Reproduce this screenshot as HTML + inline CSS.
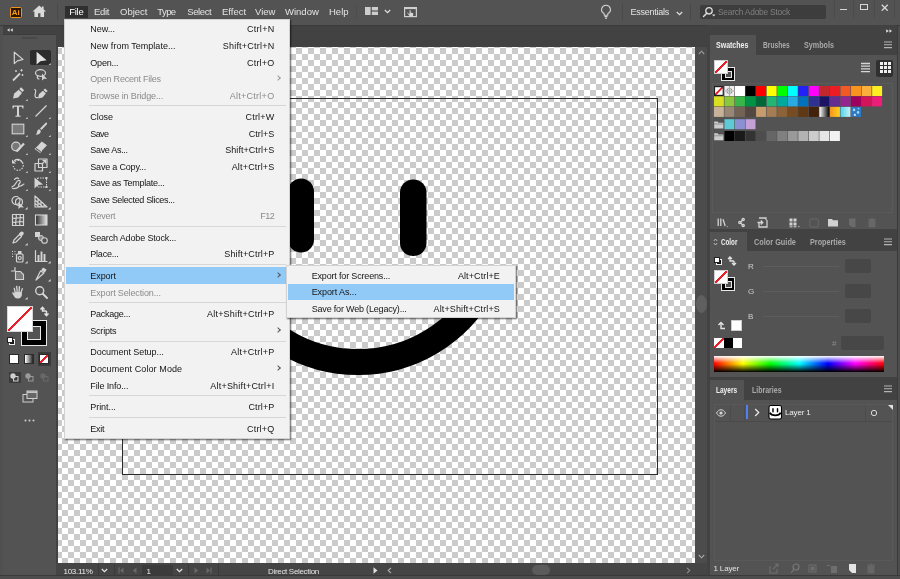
<!DOCTYPE html>
<html>
<head>
<meta charset="utf-8">
<title>Adobe Illustrator - Export As</title>
<style>
*{box-sizing:border-box;margin:0;padding:0}
html,body{width:900px;height:579px;overflow:hidden;background:#424242;font-family:"Liberation Sans",sans-serif;}
body{position:relative;color:#ddd;font-size:9px}
#root{position:absolute;left:0;top:0;width:900px;height:579px;overflow:hidden;will-change:transform}
.abs{position:absolute}
/* app bar */
#appbar{left:0;top:0;width:900px;height:26px;background:#535353;border-bottom:1px solid #3a3a3a}
#appbar .mi{position:absolute;top:6px;height:12px;line-height:12px;font-size:9.5px;color:#e4e4e4;white-space:nowrap}
#filebtn{left:65px;top:6px;width:23px;height:12px;background:#2f2f2f}
/* canvas */
#canvas{left:58px;top:47px;width:637px;height:516px;background-color:#fff;
 background-image:conic-gradient(#cbcbcb 25%,#fff 0 50%,#cbcbcb 0 75%,#fff 0);
 background-size:12px 12px;
 background-position:4px 1px;
 overflow:hidden}
#artboard{left:122px;top:98px;width:536px;height:377px;border:1px solid #2a2a2a}
/* toolbar */
#tbstrip{left:0;top:26px;width:900px;height:9px;background:#424242}
#toolbar{left:3px;top:34px;width:53px;height:541px;border-top:1px solid #3c3c3c;background:#535353}
#tbhead{left:3px;top:26px;width:53px;height:8px;background:#424242}
#leftstrip{left:0;top:26px;width:3px;height:553px;background:#505050}
/* menus */
.menu{background:#f2f2f2;border:1px solid #d2d2d2;box-shadow:1px 1px 1.5px rgba(0,0,0,.6);color:#161616;font-size:9px}
.menu .it{position:relative;height:16.53px;line-height:16.53px;white-space:nowrap}
.menu .it .l{position:absolute;left:25.3px;top:.8px}
.menu .it .r{position:absolute;right:14.6px;top:.8px}
.menu .it .a{position:absolute;right:9px;top:5.8px;width:4px;height:4px;border-top:1px solid #555;border-right:1px solid #555;transform:rotate(45deg) scale(1,1)}
.menu .it.dis{color:#8b8b8b}
.menu .it.dis .a{border-color:#9a9a9a}
.menu .it.hl{background:#91c9f7}
.menu .sep{height:5.15px;position:relative}
.menu .sep:after{content:"";position:absolute;left:24px;right:3px;top:2.1px;height:1px;background:#d7d7d7}
#filemenu{left:64px;top:19px;width:226px;height:419.5px;padding:.7px 0 0 0}
#filemenu .it.hl{margin:0 2px 0 1px}
#filemenu .it.hl .l{left:24.3px}
#filemenu .it.hl .a{right:7px}
#submenu{left:286px;top:265.2px;width:230px;height:53.3px;padding:1px 0}
#submenu .it{height:16.4px;line-height:16.4px}
#submenu .it .l{left:24.7px}
#submenu .it .r{right:15px}
#submenu .it.hl{margin:0 1.5px 0 1px}
#submenu .it.hl .l{left:23.7px}
/* right dock */
#vscroll{left:695px;top:47px;width:12px;height:516px;background:#4c4c4c}
#dockgap{left:707px;top:25px;width:3px;height:554px;background:#424242}
.panel{background:#535353}
.tabbar{background:#424242}
.tab{position:absolute;top:0;height:100%;font-size:8.5px;font-weight:bold;color:#a9a9a9;white-space:nowrap}
.tab.act{background:#535353;color:#f0f0f0}
.tab .tx{position:absolute;top:0;display:inline-block;transform-origin:0 50%}
.sw{position:absolute;width:10.05px;height:10.1px}
/* status */
#status{left:56px;top:563px;width:651px;height:12.5px;background:#454545}
#bottomstrip{left:0;top:575px;width:900px;height:4px;background:#4d4d4d;border-top:1.3px solid #3a3a3a}
#rightstrip{left:897px;top:26px;width:3px;height:553px;background:#4d4d4d;border-left:1.2px solid #3a3a3a}
</style>
</head>
<body>
<div id="root">
<!-- app bar -->
<div id="appbar" class="abs">
  <div id="filebtn" class="abs"></div>
  <span class="mi" style="left:69.300px;color:#fff;letter-spacing:-.3px">File</span>
  <span class="mi" style="left:94px;letter-spacing:-.3px">Edit</span>
  <span class="mi" style="left:120px">Object</span>
  <span class="mi" style="left:157.3px;letter-spacing:-.6px">Type</span>
  <span class="mi" style="left:187.3px;letter-spacing:-.4px">Select</span>
  <span class="mi" style="left:222px">Effect</span>
  <span class="mi" style="left:255px">View</span>
  <span class="mi" style="left:285px">Window</span>
  <span class="mi" style="left:329px">Help</span>
  <span class="mi" style="left:630.5px;font-size:9px;letter-spacing:-.25px">Essentials</span>
</div>
<div id="tbstrip" class="abs"></div>
<!-- app bar icons -->
<div class="abs" style="left:9.500px;top:6.600px;width:12.300px;height:11.600px;background:#2b1700;border:1.100px solid #f0961c;border-radius:1.500px"></div>
<span class="abs" style="left:11.800px;top:8.500px;font-size:8px;font-weight:bold;color:#ff9e1a;line-height:8px;letter-spacing:-.1px">Ai</span>
<svg class="abs" style="left:32px;top:5.300px" width="14.500" height="12.600" viewBox="0 0 15 13"><path d="M7.500 .5L.5 6.800h2V12.500h3.800V8.500h2.400v4H12.500V6.800h2z" fill="#dadada"/><rect x="10.300" y="1.500" width="1.700" height="3" fill="#dadada"/></svg>
<div class="abs" style="left:57px;top:4px;width:1px;height:16px;background:#484848"></div>
<div class="abs" style="left:356px;top:4px;width:1px;height:16px;background:#4d4d4d"></div>
<svg class="abs" style="left:365.300px;top:7px" width="13" height="8" viewBox="0 0 13 8"><rect x="0" y="0" width="5.600" height="8" fill="#cdcdcd"/><rect x="6.800" y="0" width="6.200" height="3.400" fill="#cdcdcd"/><rect x="6.800" y="4.600" width="6.200" height="3.400" fill="#cdcdcd"/></svg>
<svg class="abs" style="left:384.300px;top:8.600px" width="7" height="5" viewBox="0 0 7 5"><path d="M.8 1l2.700 2.700L6.200 1" fill="none" stroke="#dcdcdc" stroke-width="1.300"/></svg>
<svg class="abs" style="left:404px;top:7px" width="13" height="10.500" viewBox="0 0 13 10.500"><rect x=".6" y=".6" width="11.800" height="9" fill="none" stroke="#cfcfcf" stroke-width="1.200"/><path d="M.6 1.300h11.800" stroke="#cfcfcf" stroke-width="1.600"/><path d="M5.600 3.200c.6-.3 1 .1 1 .6v1.600l2 .5c.6.200.8.600.7 1.200l-.4 2.400h-3l-1.700-2.300c-.3-.5.300-1 .8-.6l.6.600z" fill="#d6d6d6"/><path d="M3.200 6h1" stroke="#cfcfcf" stroke-width=".8"/></svg>
<svg class="abs" style="left:600px;top:3.500px" width="12" height="16" viewBox="0 0 12 16"><path d="M6 1.200a4.300 4.300 0 0 0-2.300 8c.4.500.6 1.200.6 2h3.400c0-.8.200-1.500.6-2A4.300 4.300 0 0 0 6 1.200z" fill="none" stroke="#d4d4d4" stroke-width="1.100"/><path d="M4.500 12.600h3M5 14.200h2" stroke="#d4d4d4" stroke-width="1.100"/></svg>
<div class="abs" style="left:622px;top:4px;width:1px;height:16px;background:#484848"></div>
<svg class="abs" style="left:675.5px;top:11px" width="7" height="5" viewBox="0 0 7 5"><path d="M.8 1l2.700 2.700L6.200 1" fill="none" stroke="#dcdcdc" stroke-width="1.300"/></svg>
<div class="abs" style="left:690px;top:4px;width:1px;height:16px;background:#484848"></div>
<div class="abs" style="left:700px;top:5px;width:126px;height:14px;background:#3d3d3d;border-radius:2px"></div>
<svg class="abs" style="left:702px;top:6px" width="14" height="12" viewBox="0 0 14 12"><circle cx="7" cy="4.800" r="3.200" fill="none" stroke="#dedede" stroke-width="1.300"/><path d="M4.800 7.200L1.500 10.500" stroke="#dedede" stroke-width="1.500" stroke-linecap="round"/><path d="M10 8.500h3.500l-1.750 2z" fill="#dedede"/></svg>
<span class="abs" style="left:718px;top:7px;font-size:8.400px;line-height:10px;color:#808080;letter-spacing:-.22px">Search Adobe Stock</span>
<div class="abs" style="left:834px;top:0;width:1px;height:18px;background:#4b4b4b"></div>
<div class="abs" style="left:853px;top:0;width:1px;height:18px;background:#4b4b4b"></div>
<div class="abs" style="left:874px;top:0;width:1px;height:18px;background:#4b4b4b"></div>
<div class="abs" style="left:894px;top:0;width:1px;height:18px;background:#4b4b4b"></div>
<div class="abs" style="left:839.5px;top:8.700px;width:7.200px;height:1.500px;background:#d6d6d6"></div>
<div class="abs" style="left:859.700px;top:4.300px;width:8px;height:6.200px;border:1.100px solid #d6d6d6;border-top-width:1.700px"></div>
<svg class="abs" style="left:881px;top:3.500px" width="7.500" height="7.500" viewBox="0 0 8 8"><path d="M.8 .8l6.400 6.400M7.200 .8L.8 7.200" stroke="#dadada" stroke-width="1.300"/></svg>
<!-- canvas -->
<div id="canvas" class="abs"></div>
<div id="artboard" class="abs"></div>
<svg class="abs" style="left:58px;top:47px" width="637" height="516" viewBox="58 47 637 516">
  <rect x="288" y="178.5" width="26" height="74" rx="13" ry="13" fill="#000"/>
  <rect x="400" y="179.5" width="26.5" height="76.5" rx="13" ry="13" fill="#000"/>
  <path d="M 232 286 A 142.4 142.4 0 0 0 484 286" fill="none" stroke="#000" stroke-width="26" stroke-linecap="round"/>
</svg>

<!-- toolbar -->
<div id="toolbar" class="abs"></div>
<div id="tbhead" class="abs"></div><div id="leftstrip" class="abs"></div>
<!--TB-->
<div class="abs" style="left:30px;top:50px;width:21px;height:15px;background:#2c2c2c;border-radius:2px"></div>
<svg class="abs" style="left:10.0px;top:49.3px" width="16" height="16" viewBox="0 0 16 16"><path d="M4.300 3.200V14.600L7.400 11.900 13 10.400z" fill="none" stroke="#d4d4d4" stroke-width="1.2" stroke-linejoin="round" stroke-linecap="round"/></svg>
<svg class="abs" style="left:33.0px;top:49.3px" width="16" height="16" viewBox="0 0 16 16"><path d="M3.600 2.800V15.400L7.300 12.300 13.600 11.300z" fill="#e2e2e2"/></svg>
<svg class="abs" style="left:48.0px;top:62.8px" width="2.600" height="2.600" viewBox="0 0 3 3"><path d="M3 0v3H0z" fill="#d4d4d4"/></svg>
<svg class="abs" style="left:10.0px;top:67.3px" width="16" height="16" viewBox="0 0 16 16"><path d="M3 13.500L10 6.500" stroke="#d4d4d4" stroke-width="1.800" fill="none"/><path d="M11.500 2v2.600M10.200 3.300h2.600M6 3v2M5 4h2M12.500 7v2M11.500 8h2" stroke="#d4d4d4" stroke-width=".9" fill="none"/></svg>
<svg class="abs" style="left:33.0px;top:67.3px" width="16" height="16" viewBox="0 0 16 16"><ellipse cx="7.500" cy="6" rx="5" ry="3.300" fill="none" stroke="#d4d4d4" stroke-width="1.2" stroke-linejoin="round" stroke-linecap="round"/><path d="M5 8.500c-1.500 1.500-.5 3.500 1 3.500" fill="none" stroke="#d4d4d4" stroke-width="1.2" stroke-linejoin="round" stroke-linecap="round"/><path d="M9 6.500v7l2-1.800 3 .3z" fill="#d4d4d4"/></svg>
<svg class="abs" style="left:10.0px;top:85.3px" width="16" height="16" viewBox="0 0 16 16"><path d="M3 13.500l1.200-5 4.500-3.800 3.300 3.300-3.800 4.500z" fill="#d4d4d4"/><path d="M9.300 4l1.800-1.800 3 3-1.800 1.800z" fill="#d4d4d4"/></svg>
<svg class="abs" style="left:25.0px;top:98.8px" width="2.600" height="2.600" viewBox="0 0 3 3"><path d="M3 0v3H0z" fill="#d4d4d4"/></svg>
<svg class="abs" style="left:33.0px;top:85.3px" width="16" height="16" viewBox="0 0 16 16"><path d="M5 13.500l1-4.500 4-3.300 2.800 2.800-3.300 4z" fill="#d4d4d4"/><path d="M10.500 5l1.600-1.600 2.600 2.600-1.600 1.600z" fill="#d4d4d4"/><path d="M1.500 4.500c2.500 0 .5 4 .5 6s1.500 2.500 2.500 2" fill="none" stroke="#d4d4d4" stroke-width="1.2" stroke-linejoin="round" stroke-linecap="round"/></svg>
<svg class="abs" style="left:10.0px;top:103.4px" width="16" height="16" viewBox="0 0 16 16"><path d="M2.500 2.500h11v3h-1l-.5-1.700H9v8.700l1.600.3v.9H5.400v-.9L7 12.500V3.800H4L3.500 5.500h-1z" fill="#d4d4d4"/></svg>
<svg class="abs" style="left:25.0px;top:116.9px" width="2.600" height="2.600" viewBox="0 0 3 3"><path d="M3 0v3H0z" fill="#d4d4d4"/></svg>
<svg class="abs" style="left:33.0px;top:103.4px" width="16" height="16" viewBox="0 0 16 16"><path d="M2.500 13.500L13.500 2.500" stroke="#d4d4d4" stroke-width="1.300" fill="none"/></svg>
<svg class="abs" style="left:48.0px;top:116.9px" width="2.600" height="2.600" viewBox="0 0 3 3"><path d="M3 0v3H0z" fill="#d4d4d4"/></svg>
<svg class="abs" style="left:10.0px;top:121.4px" width="16" height="16" viewBox="0 0 16 16"><rect x="2.200" y="3.200" width="11.600" height="9.600" fill="#7a7a7a" stroke="#d4d4d4" stroke-width="1.100"/></svg>
<svg class="abs" style="left:25.0px;top:134.9px" width="2.600" height="2.600" viewBox="0 0 3 3"><path d="M3 0v3H0z" fill="#d4d4d4"/></svg>
<svg class="abs" style="left:33.0px;top:121.4px" width="16" height="16" viewBox="0 0 16 16"><path d="M13.800 1.800c.6.600.3 1.400-.3 2L8.500 9 7 7.500l5-5c.6-.6 1.200-1.300 1.800-.7z" fill="#d4d4d4"/><path d="M6.300 8.300l1.500 1.500c0 2.500-2 4.200-5.300 4 1.500-.8 1.300-1.800 1.500-3 .2-1.200 1.200-2.200 2.300-2.500z" fill="#d4d4d4"/></svg>
<svg class="abs" style="left:48.0px;top:134.9px" width="2.600" height="2.600" viewBox="0 0 3 3"><path d="M3 0v3H0z" fill="#d4d4d4"/></svg>
<svg class="abs" style="left:10.0px;top:139.4px" width="16" height="16" viewBox="0 0 16 16"><circle cx="6" cy="7.500" r="4.300" fill="#777" stroke="#d4d4d4" stroke-width="1.200"/><path d="M6.500 12.500L14 4.500" stroke="#d4d4d4" stroke-width="2.200"/></svg>
<svg class="abs" style="left:25.0px;top:152.9px" width="2.600" height="2.600" viewBox="0 0 3 3"><path d="M3 0v3H0z" fill="#d4d4d4"/></svg>
<svg class="abs" style="left:33.0px;top:139.4px" width="16" height="16" viewBox="0 0 16 16"><path d="M2 9.800L8.800 2.500l5.200 3.700-6.800 7.300z" fill="#d4d4d4"/><path d="M3.300 8.500l5.200 3.700-1.300 1.300-5.200-3.700z" fill="#535353" stroke="#d4d4d4" stroke-width=".9"/></svg>
<svg class="abs" style="left:48.0px;top:152.9px" width="2.600" height="2.600" viewBox="0 0 3 3"><path d="M3 0v3H0z" fill="#d4d4d4"/></svg>
<svg class="abs" style="left:10.0px;top:157.4px" width="16" height="16" viewBox="0 0 16 16"><path d="M5 4.500A5 5 0 1 1 3.300 9" fill="none" stroke="#d4d4d4" stroke-width="1.200" stroke-dasharray="1.500 1.200"/><path d="M4.500 3.500A5 5 0 0 1 12.500 6" fill="none" stroke="#d4d4d4" stroke-width="1.2" stroke-linejoin="round" stroke-linecap="round"/><path d="M2 2.500v4h4z" fill="#d4d4d4"/></svg>
<svg class="abs" style="left:25.0px;top:170.9px" width="2.600" height="2.600" viewBox="0 0 3 3"><path d="M3 0v3H0z" fill="#d4d4d4"/></svg>
<svg class="abs" style="left:33.0px;top:157.4px" width="16" height="16" viewBox="0 0 16 16"><rect x="2" y="6.500" width="7.500" height="7.500" fill="none" stroke="#d4d4d4" stroke-width="1.2" stroke-linejoin="round" stroke-linecap="round"/><rect x="5.500" y="2" width="8.500" height="8.500" fill="none" stroke="#d4d4d4" stroke-width="1.2" stroke-linejoin="round" stroke-linecap="round"/><path d="M9 7l3.500-3.500M10 3.300h2.700V6" fill="none" stroke="#d4d4d4" stroke-width="1.2" stroke-linejoin="round" stroke-linecap="round"/></svg>
<svg class="abs" style="left:48.0px;top:170.9px" width="2.600" height="2.600" viewBox="0 0 3 3"><path d="M3 0v3H0z" fill="#d4d4d4"/></svg>
<svg class="abs" style="left:10.0px;top:175.4px" width="16" height="16" viewBox="0 0 16 16"><path d="M2 12c2-1 3-2 4-4s2-3 3.500-2.500S10 8 9 9s-.5 2.500 1.500 2S13 9 14 9" fill="none" stroke="#d4d4d4" stroke-width="1.2" stroke-linejoin="round" stroke-linecap="round"/><path d="M4.500 4.500c1-1.500 3-2 4-1" fill="none" stroke="#d4d4d4" stroke-width="1.2" stroke-linejoin="round" stroke-linecap="round"/><path d="M2.500 13.500c3 .5 5-.5 6.500-2" fill="none" stroke="#d4d4d4" stroke-width="1.2" stroke-linejoin="round" stroke-linecap="round"/></svg>
<svg class="abs" style="left:25.0px;top:188.9px" width="2.600" height="2.600" viewBox="0 0 3 3"><path d="M3 0v3H0z" fill="#d4d4d4"/></svg>
<svg class="abs" style="left:33.0px;top:175.4px" width="16" height="16" viewBox="0 0 16 16"><rect x="4.500" y="3" width="9" height="9" fill="none" stroke="#d4d4d4" stroke-width="1" stroke-dasharray="1.500 1"/><path d="M1.500 2.500v11L5 10l5-.5z" fill="#d4d4d4"/><rect x="12.500" y="2" width="2" height="2" fill="#d4d4d4"/><rect x="12.500" y="11" width="2" height="2" fill="#d4d4d4"/></svg>
<svg class="abs" style="left:48.0px;top:188.9px" width="2.600" height="2.600" viewBox="0 0 3 3"><path d="M3 0v3H0z" fill="#d4d4d4"/></svg>
<svg class="abs" style="left:10.0px;top:193.5px" width="16" height="16" viewBox="0 0 16 16"><circle cx="6" cy="6.500" r="4" fill="none" stroke="#d4d4d4" stroke-width="1.2" stroke-linejoin="round" stroke-linecap="round"/><circle cx="9" cy="8" r="3.500" fill="none" stroke="#d4d4d4" stroke-width="1.2" stroke-linejoin="round" stroke-linecap="round"/><path d="M8.500 8v7l2-1.800 3.500.2z" fill="#d4d4d4"/></svg>
<svg class="abs" style="left:25.0px;top:207.0px" width="2.600" height="2.600" viewBox="0 0 3 3"><path d="M3 0v3H0z" fill="#d4d4d4"/></svg>
<svg class="abs" style="left:33.0px;top:193.5px" width="16" height="16" viewBox="0 0 16 16"><path d="M2 2v11h12zM2 6l8 7M2 9.500l5 3.500M5 4.800V13M8 7.600V13M11 10.300V13" fill="none" stroke="#d4d4d4" stroke-width="1.2" stroke-linejoin="round" stroke-linecap="round" stroke-width=".9"/></svg>
<svg class="abs" style="left:48.0px;top:207.0px" width="2.600" height="2.600" viewBox="0 0 3 3"><path d="M3 0v3H0z" fill="#d4d4d4"/></svg>
<svg class="abs" style="left:10.0px;top:211.5px" width="16" height="16" viewBox="0 0 16 16"><rect x="2.500" y="2.500" width="11" height="11" fill="none" stroke="#d4d4d4" stroke-width="1.2" stroke-linejoin="round" stroke-linecap="round"/><path d="M2.500 6c3 1.500 7-1.500 11 0M2.500 10c3 1.500 7-1.500 11 0M6 2.500c1.500 3-1.500 7 0 11M10 2.500c1.500 3-1.500 7 0 11" fill="none" stroke="#d4d4d4" stroke-width="1.2" stroke-linejoin="round" stroke-linecap="round" stroke-width=".8"/></svg>
<svg class="abs" style="left:33.0px;top:211.5px" width="16" height="16" viewBox="0 0 16 16"><defs><linearGradient id="gg" x1="0" x2="1"><stop offset="0" stop-color="#2a2a2a"/><stop offset="1" stop-color="#e8e8e8"/></linearGradient></defs><rect x="2.500" y="3" width="11.500" height="10" fill="url(#gg)" stroke="#d4d4d4" stroke-width="1.100"/></svg>
<svg class="abs" style="left:10.0px;top:229.5px" width="16" height="16" viewBox="0 0 16 16"><path d="M3 13l1-3 5.500-5.500 2 2L6 12z" fill="none" stroke="#d4d4d4" stroke-width="1.2" stroke-linejoin="round" stroke-linecap="round"/><path d="M9 3.500l1.500-1.500c.8-.8 2-.8 2.700 0s.8 2 0 2.700L11.700 6.200z" fill="#d4d4d4"/></svg>
<svg class="abs" style="left:25.0px;top:243.0px" width="2.600" height="2.600" viewBox="0 0 3 3"><path d="M3 0v3H0z" fill="#d4d4d4"/></svg>
<svg class="abs" style="left:33.0px;top:229.5px" width="16" height="16" viewBox="0 0 16 16"><rect x="2" y="2" width="5" height="5" fill="#d4d4d4"/><circle cx="8" cy="8" r="2.500" fill="#888" stroke="#d4d4d4" stroke-width="1"/><circle cx="11.500" cy="10.500" r="2.800" fill="#535353" stroke="#d4d4d4" stroke-width="1.100"/></svg>
<svg class="abs" style="left:10.0px;top:247.5px" width="16" height="16" viewBox="0 0 16 16"><rect x="6.500" y="6" width="6.500" height="8" rx="1" fill="none" stroke="#d4d4d4" stroke-width="1.2" stroke-linejoin="round" stroke-linecap="round"/><rect x="8" y="3" width="3.500" height="3" fill="#d4d4d4"/><circle cx="9.700" cy="10" r="1.500" fill="none" stroke="#d4d4d4" stroke-width="1.2" stroke-linejoin="round" stroke-linecap="round" stroke-width=".9"/><path d="M2 3.500h1M4.500 3.500h1M2 6h1M4.500 6h1M2 8.500h1" stroke="#d4d4d4" stroke-width="1.100"/></svg>
<svg class="abs" style="left:25.0px;top:261.0px" width="2.600" height="2.600" viewBox="0 0 3 3"><path d="M3 0v3H0z" fill="#d4d4d4"/></svg>
<svg class="abs" style="left:33.0px;top:247.5px" width="16" height="16" viewBox="0 0 16 16"><path d="M2.500 2.500v11h11.500" fill="none" stroke="#d4d4d4" stroke-width="1.2" stroke-linejoin="round" stroke-linecap="round"/><path d="M5.500 13V7M8.500 13V3.500M11.500 13V6" stroke="#d4d4d4" stroke-width="1.900" fill="none"/></svg>
<svg class="abs" style="left:48.0px;top:261.0px" width="2.600" height="2.600" viewBox="0 0 3 3"><path d="M3 0v3H0z" fill="#d4d4d4"/></svg>
<svg class="abs" style="left:10.0px;top:265.5px" width="16" height="16" viewBox="0 0 16 16"><path d="M5 1.500V5M1.500 5H5" fill="none" stroke="#d4d4d4" stroke-width="1.2" stroke-linejoin="round" stroke-linecap="round"/><path d="M5.500 5.500h5l3 3v5h-8z" fill="#7b7b7b" stroke="#d4d4d4" stroke-width="1.100"/></svg>
<svg class="abs" style="left:33.0px;top:265.5px" width="16" height="16" viewBox="0 0 16 16"><path d="M3 14l4.500-9 3.500 2z" fill="none" stroke="#d4d4d4" stroke-width="1.2" stroke-linejoin="round" stroke-linecap="round"/><path d="M8 4.500l2-3 3.500 2-1.500 3z" fill="#d4d4d4"/></svg>
<svg class="abs" style="left:48.0px;top:279.0px" width="2.600" height="2.600" viewBox="0 0 3 3"><path d="M3 0v3H0z" fill="#d4d4d4"/></svg>
<svg class="abs" style="left:10.0px;top:283.6px" width="16" height="16" viewBox="0 0 16 16"><path d="M5.300 9L4.300 4.300M7.200 8.500L6.700 2.300M9 8.500L9.400 2.600M10.800 9L12.300 4.600" fill="none" stroke="#d4d4d4" stroke-width="1.350" stroke-linecap="round"/><path d="M4.600 8h7l.3 1.500c.3 2.700-1.400 5-3.600 5h-1c-1.500 0-2.400-.8-3.100-2L2.300 9.600c-.6-1 .8-1.800 1.500-.9l.8 1z" fill="#d4d4d4"/></svg>
<svg class="abs" style="left:25.0px;top:297.1px" width="2.600" height="2.600" viewBox="0 0 3 3"><path d="M3 0v3H0z" fill="#d4d4d4"/></svg>
<svg class="abs" style="left:33.0px;top:283.6px" width="16" height="16" viewBox="0 0 16 16"><circle cx="6.700" cy="6.700" r="4" fill="none" stroke="#d4d4d4" stroke-width="1.400"/><path d="M9.800 9.800L14 14" stroke="#d4d4d4" stroke-width="2" stroke-linecap="round"/></svg>
<div class="abs" style="left:22px;top:37px;width:15px;height:2px;background:#484848"></div>
<svg class="abs" style="left:6.5px;top:28px" width="6" height="4" viewBox="0 0 6 4"><path d="M0 2L2.600 .2v3.600zM3.200 2L5.800 .2v3.600z" fill="#d8d8d8"/></svg>
<div class="abs" style="left:21px;top:320px;width:26px;height:26px;background:#000;border:1px solid #e8e8e8"></div>
<div class="abs" style="left:27px;top:326px;width:14px;height:14px;background:#535353;border:1px solid #e8e8e8"></div>
<div class="abs" style="left:7px;top:306px;width:26px;height:26px;background:linear-gradient(to bottom right,#fff 47.3%,#e8202a 47.8%,#e8202a 52.2%,#fff 52.7%);border:1px solid #d8d8d8"></div>
<svg class="abs" style="left:39px;top:306px" width="11" height="11" viewBox="0 0 11 11"><path d="M1.500 3.500l2-2.200 2 2.200M3.500 2v3h4M9.500 7.500l-2 2.200-2-2.200M7.500 9V5" fill="none" stroke="#e4e4e4" stroke-width="1.400"/></svg>
<div class="abs" style="left:9px;top:339px;width:6px;height:6px;background:#111;border:1px solid #eee"></div>
<div class="abs" style="left:6.500px;top:336.500px;width:6px;height:6px;background:#fff;border:1px solid #222"></div>
<div class="abs" style="left:37.500px;top:352px;width:13px;height:13.500px;background:#3a3a3a"></div>
<div class="abs" style="left:9px;top:354px;width:10px;height:9.500px;background:#fff;border:1px solid #2a2a2a"></div>
<div class="abs" style="left:24px;top:354px;width:10px;height:9.500px;background:linear-gradient(to right,#fff,#222);border:1px solid #2a2a2a"></div>
<div class="abs" style="left:39px;top:354px;width:10px;height:9.500px;background:linear-gradient(to bottom right,#fff 40%,#e8202a 40%,#e8202a 60%,#fff 60%);border:1px solid #2a2a2a"></div>
<div class="abs" style="left:8.500px;top:371.500px;width:12px;height:11.500px;background:#3b3b3b"></div>
<svg class="abs" style="left:9.0px;top:372.0px" width="10" height="10" viewBox="0 0 10 10"><circle cx="4" cy="4" r="2.700" fill="#cfcfcf"/><rect x="4.500" y="4.500" width="4.500" height="4.500" fill="none" stroke="#cfcfcf" stroke-width="1"/></svg>
<svg class="abs" style="left:24.0px;top:372.0px" width="10" height="10" viewBox="0 0 10 10"><circle cx="4" cy="4" r="2.700" fill="#9a9a9a"/><rect x="4.500" y="4.500" width="4.500" height="4.500" fill="none" stroke="#9a9a9a" stroke-width="1"/></svg>
<svg class="abs" style="left:38.5px;top:372.0px" width="10" height="10" viewBox="0 0 10 10"><circle cx="4" cy="4" r="2.700" fill="#686868"/><rect x="4.500" y="4.500" width="4.500" height="4.500" fill="none" stroke="#686868" stroke-width="1"/></svg>
<svg class="abs" style="left:21.5px;top:389.5px" width="16" height="13" viewBox="0 0 16 13"><rect x="1" y="4.500" width="10" height="7.500" fill="#535353" stroke="#cfcfcf" stroke-width="1"/><rect x="5" y="1" width="10" height="7.500" fill="#666" stroke="#cfcfcf" stroke-width="1"/><path d="M5 2.200h10" stroke="#cfcfcf" stroke-width="1.400"/></svg>
<svg class="abs" style="left:23.5px;top:418.5px" width="11" height="3" viewBox="0 0 11 3"><circle cx="1.500" cy="1.500" r="1" fill="#d0d0d0"/><circle cx="5.500" cy="1.500" r="1" fill="#d0d0d0"/><circle cx="9.500" cy="1.500" r="1" fill="#d0d0d0"/></svg>
<!--/TB-->

<!-- right side -->
<div id="vscroll" class="abs"></div>
<div id="dockgap" class="abs"></div>
<!-- scroll arrows -->
<svg class="abs" style="left:698px;top:50px" width="7" height="5" viewBox="0 0 7 5"><path d="M.8 4L3.500 1.200 6.200 4" fill="none" stroke="#9c9c9c" stroke-width="1.100"/></svg>
<svg class="abs" style="left:698px;top:554px" width="7" height="5" viewBox="0 0 7 5"><path d="M.8 1L3.500 3.800 6.200 1" fill="none" stroke="#a8a8a8" stroke-width="1.100"/></svg>
<div class="abs" style="left:696px;top:294.5px;width:11px;height:18.5px;background:#5f5f5f;border-radius:50%"></div>




<!-- right dock -->
<div class="abs" style="left:710px;top:25px;width:187px;height:10px;background:#424242"></div>
<svg class="abs" style="left:886px;top:28.5px" width="6" height="4" viewBox="0 0 6 4"><path d="M2.800 2L.2 .2v3.600zM6 2L3.400 .2v3.600z" fill="#e0e0e0"/></svg>
<!-- swatches panel -->
<div class="abs tabbar" style="left:710px;top:35px;width:187px;height:20px">
  <div class="tab act" style="left:0;width:46px;line-height:20px"><span class="tx" style="left:5.7px;transform:scaleX(0.825)">Swatches</span></div>
  <div class="tab" style="left:0;line-height:20px"><span class="tx" style="left:52.6px;transform:scaleX(0.782)">Brushes</span></div>
  <div class="tab" style="left:0;line-height:20px"><span class="tx" style="left:93.7px;transform:scaleX(0.845)">Symbols</span></div>
</div>
<svg class="abs" style="left:884px;top:41px" width="9" height="8" viewBox="0 0 9 8"><path d="M0 1h8M0 3.8h8M0 6.600h8" stroke="#b4b4b4" stroke-width="1.1"/></svg>
<div class="abs panel" style="left:710px;top:55px;width:187px;height:174px"></div>
<!-- fill/stroke in swatches -->
<div class="abs" style="left:721px;top:67px;width:14px;height:14px;background:#000;border:1px solid #e6e6e6"></div>
<div class="abs" style="left:724.5px;top:70.5px;width:7px;height:7px;background:#535353;border:1px solid #e6e6e6"></div>
<div class="abs" style="left:714px;top:60px;width:14px;height:14px;background:linear-gradient(to bottom right,#fff 45%,#e8202a 45%,#e8202a 55%,#fff 55%);border:1px solid #d0d0d0"></div>
<!-- view icons -->
<svg class="abs" style="left:860px;top:62px" width="11" height="11" viewBox="0 0 11 11"><path d="M1 1.5h9M1 4.2h9M1 6.9h9M1 9.6h9" stroke="#d6d6d6" stroke-width="1.3"/></svg>
<div class="abs" style="left:876px;top:59.500px;width:17px;height:17px;background:#303030;border-radius:2px"></div>
<svg class="abs" style="left:880px;top:62px" width="11" height="11" viewBox="0 0 11 11"><g fill="#f0f0f0"><rect x="0" y="0" width="3" height="3"/><rect x="4" y="0" width="3" height="3"/><rect x="8" y="0" width="3" height="3"/><rect x="0" y="4" width="3" height="3"/><rect x="4" y="4" width="3" height="3"/><rect x="8" y="4" width="3" height="3"/><rect x="0" y="8" width="3" height="3"/><rect x="4" y="8" width="3" height="3"/><rect x="8" y="8" width="3" height="3"/></g></svg>
<!-- swatch list box -->
<div class="abs" style="left:712px;top:83px;width:181px;height:130px;border:1px solid #5a5a5a"></div>
<svg class="abs" style="left:712px;top:84px" width="180" height="60" viewBox="0 0 180 60">
<defs><linearGradient id="sg1" x1="0" x2="1"><stop offset="0" stop-color="#fff"/><stop offset="1" stop-color="#000"/></linearGradient><linearGradient id="sg2" x1="0" x2="1"><stop offset="0" stop-color="#f7931e"/><stop offset="1" stop-color="#fcd421"/></linearGradient><linearGradient id="sg3" x1="0" x2="1"><stop offset="0" stop-color="#4fd6ec"/><stop offset="1" stop-color="#c8f0f6"/></linearGradient></defs>
<rect x="1.90" y="2.00" width="9.95" height="10.0" fill="#fff"/><path d="M3.10 10.80L10.65 3.20" stroke="#e8141e" stroke-width="1.800"/><rect x="2.50" y="2.60" width="8.75" height="8.80" fill="none" stroke="#1c1c1c" stroke-width="1.200"/>
<rect x="12.45" y="2.00" width="9.95" height="10.0" fill="#ededed"/><circle cx="17.42" cy="7.00" r="2.600" fill="none" stroke="#6a6a6a" stroke-width=".8"/><path d="M17.42 2.00v10.0M12.45 7.00h9.95" stroke="#ededed" stroke-width="1.600"/><path d="M17.42 2.00v10.0M12.45 7.00h9.95" stroke="#7a7a7a" stroke-width=".6"/>
<rect x="23.00" y="2.00" width="9.95" height="10.0" fill="#ffffff"/>
<rect x="33.55" y="2.00" width="9.95" height="10.0" fill="#000000"/>
<rect x="44.10" y="2.00" width="9.95" height="10.0" fill="#ff0000"/>
<rect x="54.65" y="2.00" width="9.95" height="10.0" fill="#ffff00"/>
<rect x="65.20" y="2.00" width="9.95" height="10.0" fill="#00ff00"/>
<rect x="75.75" y="2.00" width="9.95" height="10.0" fill="#00ffff"/>
<rect x="86.30" y="2.00" width="9.95" height="10.0" fill="#2222f8"/>
<rect x="96.85" y="2.00" width="9.95" height="10.0" fill="#ff00ff"/>
<rect x="107.40" y="2.00" width="9.95" height="10.0" fill="#c1272d"/>
<rect x="117.95" y="2.00" width="9.95" height="10.0" fill="#ed1c24"/>
<rect x="128.50" y="2.00" width="9.95" height="10.0" fill="#f15a24"/>
<rect x="139.05" y="2.00" width="9.95" height="10.0" fill="#f7931e"/>
<rect x="149.60" y="2.00" width="9.95" height="10.0" fill="#fbb03b"/>
<rect x="160.15" y="2.00" width="9.95" height="10.0" fill="#fcee21"/>
<rect x="1.90" y="12.40" width="9.95" height="10.0" fill="#d9e021"/>
<rect x="12.45" y="12.40" width="9.95" height="10.0" fill="#8cc63f"/>
<rect x="23.00" y="12.40" width="9.95" height="10.0" fill="#39b54a"/>
<rect x="33.55" y="12.40" width="9.95" height="10.0" fill="#009245"/>
<rect x="44.10" y="12.40" width="9.95" height="10.0" fill="#006837"/>
<rect x="54.65" y="12.40" width="9.95" height="10.0" fill="#22b573"/>
<rect x="65.20" y="12.40" width="9.95" height="10.0" fill="#00a99d"/>
<rect x="75.75" y="12.40" width="9.95" height="10.0" fill="#29abe2"/>
<rect x="86.30" y="12.40" width="9.95" height="10.0" fill="#0071bc"/>
<rect x="96.85" y="12.40" width="9.95" height="10.0" fill="#2e3192"/>
<rect x="107.40" y="12.40" width="9.95" height="10.0" fill="#1b1464"/>
<rect x="117.95" y="12.40" width="9.95" height="10.0" fill="#662d91"/>
<rect x="128.50" y="12.40" width="9.95" height="10.0" fill="#93278f"/>
<rect x="139.05" y="12.40" width="9.95" height="10.0" fill="#9e005d"/>
<rect x="149.60" y="12.40" width="9.95" height="10.0" fill="#d4145a"/>
<rect x="160.15" y="12.40" width="9.95" height="10.0" fill="#ed1e79"/>
<rect x="1.90" y="22.90" width="9.95" height="10.0" fill="#c7b299"/>
<rect x="12.45" y="22.90" width="9.95" height="10.0" fill="#998675"/>
<rect x="23.00" y="22.90" width="9.95" height="10.0" fill="#736357"/>
<rect x="33.55" y="22.90" width="9.95" height="10.0" fill="#534741"/>
<rect x="44.10" y="22.90" width="9.95" height="10.0" fill="#c69c6d"/>
<rect x="54.65" y="22.90" width="9.95" height="10.0" fill="#a67c52"/>
<rect x="65.20" y="22.90" width="9.95" height="10.0" fill="#8c6239"/>
<rect x="75.75" y="22.90" width="9.95" height="10.0" fill="#754c24"/>
<rect x="86.30" y="22.90" width="9.95" height="10.0" fill="#603813"/>
<rect x="96.85" y="22.90" width="9.95" height="10.0" fill="#42210b"/>
<rect x="107.40" y="22.90" width="9.95" height="10.0" fill="url(#sg1)"/>
<rect x="117.95" y="22.90" width="9.95" height="10.0" fill="url(#sg2)"/>
<rect x="128.50" y="22.90" width="9.95" height="10.0" fill="url(#sg3)"/>
<rect x="139.05" y="22.90" width="9.95" height="10.0" fill="#2d79c4"/><circle cx="142.05" cy="25.90" r="1.300" fill="#a5d3f2"/><circle cx="146.05" cy="28.40" r="1.300" fill="#a5d3f2"/><circle cx="142.85" cy="30.90" r="1.100" fill="#cfe7f8"/><circle cx="146.55" cy="24.70" r=".9" fill="#8ec4ec"/>
<path d="M2.20 37.50h3.300l1 1.300h4.900v5.600h-9.200z" fill="#cdcdcd"/><path d="M2.20 40.00h9.200" stroke="#7a7a7a" stroke-width=".7"/>
<rect x="12.45" y="35.20" width="9.95" height="10.0" fill="#5fc9d6"/>
<rect x="23.00" y="35.20" width="9.95" height="10.0" fill="#8a90d2"/>
<rect x="33.55" y="35.20" width="9.95" height="10.0" fill="#c3a1d8"/>
<path d="M2.20 49.30h3.300l1 1.300h4.900v5.600h-9.200z" fill="#cdcdcd"/><path d="M2.20 51.80h9.200" stroke="#7a7a7a" stroke-width=".7"/>
<rect x="12.45" y="47.00" width="9.95" height="10.0" fill="#000000"/>
<rect x="23.00" y="47.00" width="9.95" height="10.0" fill="#1a1a1a"/>
<rect x="33.55" y="47.00" width="9.95" height="10.0" fill="#333333"/>
<rect x="44.10" y="47.00" width="9.95" height="10.0" fill="#4d4d4d"/>
<rect x="54.65" y="47.00" width="9.95" height="10.0" fill="#666666"/>
<rect x="65.20" y="47.00" width="9.95" height="10.0" fill="#808080"/>
<rect x="75.75" y="47.00" width="9.95" height="10.0" fill="#999999"/>
<rect x="86.30" y="47.00" width="9.95" height="10.0" fill="#b3b3b3"/>
<rect x="96.85" y="47.00" width="9.95" height="10.0" fill="#cccccc"/>
<rect x="107.40" y="47.00" width="9.95" height="10.0" fill="#e6e6e6"/>
<rect x="117.95" y="47.00" width="9.95" height="10.0" fill="#f2f2f2"/>
</svg>
<!-- swatches bottom icons -->
<svg class="abs" style="left:712px;top:216px" width="180" height="13" viewBox="0 0 180 13">
  <g fill="none" stroke="#d2d2d2" stroke-width="1.300">
    <path d="M6.200 2.500v7.500M8.800 2.500v7.500M11 3.300l2.200 6.700"/>
    <circle cx="31.200" cy="3.600" r="1.100"/><circle cx="27.800" cy="6.500" r="1.100"/><circle cx="31.200" cy="9.400" r="1.100"/><path d="M28.700 6l1.700-1.700M28.700 7l1.700 1.700"/>
    <path d="M47 2h7v2M55 4v7h-8V7M45.500 6.500h5M48.800 4.500l2 2-2 2"/>
  </g>
  <path d="M14.500 10.200h1.600l-.8 1z" fill="#d2d2d2"/>
  <g fill="#d2d2d2"><rect x="77.500" y="2.500" width="3" height="3"/><rect x="81.500" y="2.500" width="3" height="3"/><rect x="77.500" y="6.500" width="3" height="3"/><rect x="81.500" y="6.500" width="3" height="3"/><rect x="77.500" y="10.300" width="3" height="1"/><rect x="81.500" y="10.300" width="3" height="1"/><path d="M86 10h1.800l-.9 1.200z"/></g>
  <rect x="97.800" y="3" width="8.500" height="8" rx="1" fill="none" stroke="#696969"/>
  <path d="M116 3h4l1 1.300h5V10.500h-10z" fill="#d2d2d2"/>
  <path d="M137 2.500h6.500v8.500h-4l-2.500-2.500z" fill="#6b6b6b"/>
  <path d="M157 4.500h6v6.500h-6zM156 3.500h8M159 2.500h2" fill="#676767" stroke="#676767" stroke-width="1"/>
</svg>
<!-- color panel -->
<div class="abs tabbar" style="left:710px;top:232px;width:187px;height:20px">
  <div class="tab act" style="left:0;width:37px;line-height:20.5px"><span class="tx" style="left:10.8px;transform:scaleX(0.735)">Color</span></div>
  <div class="tab" style="left:0;line-height:20.5px"><span class="tx" style="left:43.5px;transform:scaleX(0.862)">Color Guide</span></div>
  <div class="tab" style="left:0;line-height:20.5px"><span class="tx" style="left:100.1px;transform:scaleX(0.852)">Properties</span></div>
</div>
<svg class="abs" style="left:713px;top:238px" width="5" height="8" viewBox="0 0 5 8"><path d="M.8 3L2.500 1 4.200 3M.8 5L2.500 7 4.200 5" fill="none" stroke="#c8c8c8" stroke-width=".9"/></svg>
<svg class="abs" style="left:884px;top:238px" width="9" height="8" viewBox="0 0 9 8"><path d="M0 1h8M0 3.8h8M0 6.600h8" stroke="#b4b4b4" stroke-width="1.1"/></svg>
<div class="abs panel" style="left:710px;top:251px;width:187px;height:126px"></div>
<!-- small icons -->
<div class="abs" style="left:716px;top:259px;width:6px;height:6px;background:#111;border:1px solid #eee"></div>
<div class="abs" style="left:713.5px;top:256.5px;width:6px;height:6px;background:#fff;border:1px solid #222"></div>
<svg class="abs" style="left:727px;top:256px" width="10" height="10" viewBox="0 0 10 10"><path d="M2.500 1v0M1 3l2-2 2 2M3 1.500v3.500h4M9 7L7 9 5 7M7 8.500V5" fill="none" stroke="#e2e2e2" stroke-width="1.3"/></svg>
<div class="abs" style="left:721px;top:277px;width:14px;height:14px;background:#000;border:1px solid #e6e6e6"></div>
<div class="abs" style="left:724.5px;top:280.5px;width:7px;height:7px;background:#535353;border:1px solid #e6e6e6"></div>
<div class="abs" style="left:714px;top:270px;width:14px;height:14px;background:linear-gradient(to bottom right,#fff 45%,#e8202a 45%,#e8202a 55%,#fff 55%);border:1px solid #d0d0d0"></div>
<span class="abs" style="left:748px;top:262px;font-size:8px;color:#cfcfcf">R</span>
<span class="abs" style="left:748px;top:287px;font-size:8px;color:#cfcfcf">G</span>
<span class="abs" style="left:748px;top:312px;font-size:8px;color:#cfcfcf">B</span>
<div class="abs" style="left:763px;top:266px;width:76px;height:1px;background:#5d5d5d"></div>
<div class="abs" style="left:763px;top:291px;width:76px;height:1px;background:#5d5d5d"></div>
<div class="abs" style="left:763px;top:316px;width:76px;height:1px;background:#5d5d5d"></div>
<div class="abs" style="left:845px;top:259px;width:26px;height:14px;background:#474747;border-radius:2px"></div>
<div class="abs" style="left:845px;top:284px;width:26px;height:14px;background:#474747;border-radius:2px"></div>
<div class="abs" style="left:845px;top:309px;width:26px;height:14px;background:#474747;border-radius:2px"></div>
<span class="abs" style="left:832px;top:339px;font-size:8px;color:#8a8a8a">#</span>
<div class="abs" style="left:841px;top:336px;width:43px;height:14px;background:#474747;border-radius:2px"></div>
<svg class="abs" style="left:717px;top:321px" width="9" height="9" viewBox="0 0 9 9"><path d="M1.500 4l2.500-2.500L6.500 4M4 2v5.500h4" fill="none" stroke="#e2e2e2" stroke-width="1.4"/></svg>
<div class="abs" style="left:731px;top:320px;width:11px;height:11px;background:#fff;border:1px solid #ccc"></div>
<div class="abs" style="left:714px;top:338px;width:10px;height:10px;background:linear-gradient(to bottom right,#fff 42%,#e8202a 42%,#e8202a 58%,#fff 58%)"></div>
<div class="abs" style="left:724px;top:338px;width:9px;height:10px;background:#000"></div>
<div class="abs" style="left:733px;top:338px;width:9px;height:10px;background:#fff"></div>
<div class="abs" style="left:714px;top:356px;width:170px;height:16px;background:linear-gradient(to bottom,#fff 0%,rgba(255,255,255,0) 45%,rgba(0,0,0,0) 50%,#000 100%),linear-gradient(to right,#f00 0%,#ff0 17%,#0f0 33%,#0ff 50%,#00f 67%,#f0f 83%,#f00 100%)"></div>
<!-- layers panel -->
<div class="abs tabbar" style="left:710px;top:380px;width:187px;height:20px">
  <div class="tab act" style="left:0;width:34px;line-height:20px"><span class="tx" style="left:5.9px;transform:scaleX(0.768)">Layers</span></div>
  <div class="tab" style="left:0;line-height:20px"><span class="tx" style="left:41.5px;transform:scaleX(0.822)">Libraries</span></div>
</div>
<svg class="abs" style="left:884px;top:385px" width="9" height="8" viewBox="0 0 9 8"><path d="M0 1h8M0 3.8h8M0 6.600h8" stroke="#b4b4b4" stroke-width="1.1"/></svg>
<div class="abs panel" style="left:710px;top:400px;width:187px;height:175px"></div>
<div class="abs" style="left:714px;top:403.5px;width:178.5px;height:157px;border:1px solid #595959"></div>
<div class="abs" style="left:715px;top:420.5px;width:176.5px;height:1px;background:#4a4a4a"></div><div class="abs" style="left:730px;top:404.5px;width:1px;height:16px;background:#4b4b4b"></div><div class="abs" style="left:743.5px;top:404.5px;width:1px;height:16px;background:#4b4b4b"></div><div class="abs" style="left:864.5px;top:404.5px;width:1px;height:16px;background:#4b4b4b"></div>
<svg class="abs" style="left:716px;top:408.5px" width="10" height="8" viewBox="0 0 10 8"><path d="M.5 4C2 1.500 3.500 .8 5 .8S8 1.500 9.500 4C8 6.500 6.500 7.200 5 7.200S2 6.500 .5 4z" fill="none" stroke="#d8d8d8" stroke-width="1"/><circle cx="5" cy="4" r="1.600" fill="#d8d8d8"/></svg>
<div class="abs" style="left:746px;top:405.3px;width:2.2px;height:14px;background:#4f7ff0"></div>
<svg class="abs" style="left:753.5px;top:408px" width="6" height="9" viewBox="0 0 6 9"><path d="M1.200 1L4.700 4.500 1.200 8" fill="none" stroke="#e6e6e6" stroke-width="1.300"/></svg>
<svg class="abs" style="left:767.5px;top:405px" width="14.5" height="14.5" viewBox="0 0 15 16"><rect x=".6" y=".6" width="13.800" height="14.800" rx="2" fill="#fff" stroke="#000" stroke-width="1.200"/><path d="M5 4v3.500M10 4v3.500" stroke="#000" stroke-width="1.600" stroke-linecap="round"/><path d="M1.500 8.500C3.500 12.500 11.500 12.500 13.500 8.500" fill="none" stroke="#000" stroke-width="2"/></svg>
<span class="abs" style="left:785px;top:408px;font-size:8px;line-height:9px;color:#ececec;letter-spacing:-.15px">Layer 1</span>
<svg class="abs" style="left:869.8px;top:408.7px" width="8" height="8" viewBox="0 0 8 8"><circle cx="4" cy="4" r="2.700" fill="none" stroke="#d8d8d8" stroke-width="1"/></svg>
<svg class="abs" style="left:887.5px;top:405px" width="5" height="5" viewBox="0 0 6 6"><path d="M0 0h6v6z" fill="#e0e0e0"/></svg>
<span class="abs" style="left:713.5px;top:563.5px;font-size:8px;line-height:9px;color:#e2e2e2;letter-spacing:-.15px">1 Layer</span>
<svg class="abs" style="left:765px;top:561px" width="120" height="14" viewBox="0 0 120 14">
  <g fill="none" stroke="#6e6e6e" stroke-width="1.100"><path d="M5 5v7h7V8M8 8l5-5M10 3h3v3"/></g>
  <g fill="none" stroke="#787878" stroke-width="1.200"><circle cx="31" cy="6" r="3"/><path d="M28.800 8.500L26 12"/></g>
  <g fill="none" stroke="#6e6e6e" stroke-width="1"><rect x="44" y="4" width="7" height="7"/><rect x="46" y="6" width="3" height="3" fill="#6e6e6e"/></g>
  <g fill="#6e6e6e"><path d="M62 4h3v1h-3zM66 5h6v7h-6z"/></g>
  <path d="M84 3h7v9h-4l-3-3z" fill="#e4e4e4"/>
  <path d="M103 5h6v7h-6zM102 4h8M105 3h2" fill="#666" stroke="#666" stroke-width="1"/>
</svg>

<!-- status -->
<div id="status" class="abs"></div>
<div id="rightstrip" class="abs"></div><div id="bottomstrip" class="abs"></div>
<!-- status bar -->
<span class="abs" style="left:63.500px;top:566.5px;font-size:8px;line-height:9px;color:#ececec;letter-spacing:-.28px">103.11%</span>
<div class="abs" style="left:98px;top:564px;width:1px;height:11px;background:#393939"></div>
<svg class="abs" style="left:101px;top:568px" width="7" height="5" viewBox="0 0 7 5"><path d="M.8 1L3.500 3.700 6.200 1" fill="none" stroke="#e4e4e4" stroke-width="1.200"/></svg>
<div class="abs" style="left:114px;top:564px;width:1px;height:11px;background:#393939"></div>
<svg class="abs" style="left:118px;top:566.500px" width="6" height="7" viewBox="0 0 6 7"><path d="M1 .5v6" stroke="#686868" stroke-width="1.200"/><path d="M5.500 .5v6L2 3.500z" fill="#686868"/></svg>
<svg class="abs" style="left:131.500px;top:566.500px" width="5" height="7" viewBox="0 0 5 7"><path d="M4.500 .5v6L.8 3.500z" fill="#686868"/></svg>
<div class="abs" style="left:142px;top:564.500px;width:31px;height:10.500px;background:#3b3b3b"></div>
<span class="abs" style="left:146.500px;top:566.5px;font-size:8px;line-height:9px;color:#ececec">1</span>
<svg class="abs" style="left:176px;top:568px" width="7" height="5" viewBox="0 0 7 5"><path d="M.8 1L3.500 3.700 6.200 1" fill="none" stroke="#e4e4e4" stroke-width="1.200"/></svg>
<div class="abs" style="left:188px;top:564px;width:1px;height:11px;background:#393939"></div>
<svg class="abs" style="left:194px;top:566.500px" width="5" height="7" viewBox="0 0 5 7"><path d="M.5 .5v6L4.200 3.500z" fill="#686868"/></svg>
<svg class="abs" style="left:205.500px;top:566.500px" width="6" height="7" viewBox="0 0 6 7"><path d="M5 .5v6" stroke="#686868" stroke-width="1.200"/><path d="M.5 .5v6L4 3.500z" fill="#686868"/></svg>
<div class="abs" style="left:218px;top:564px;width:1px;height:11px;background:#393939"></div>
<span class="abs" style="left:268px;top:566.5px;font-size:8px;line-height:9px;color:#e4e4e4;letter-spacing:-.32px">Direct Selection</span>
<svg class="abs" style="left:373px;top:566.500px" width="5" height="7" viewBox="0 0 5 7"><path d="M.5 .3v6.400L4.500 3.500z" fill="#e0e0e0"/></svg>
<svg class="abs" style="left:386.500px;top:566.500px" width="5" height="7" viewBox="0 0 5 7"><path d="M4 .8L1.200 3.500 4 6.200" fill="none" stroke="#b0b0b0" stroke-width="1.100"/></svg>
<svg class="abs" style="left:686px;top:566.500px" width="5" height="7" viewBox="0 0 5 7"><path d="M1 .8L3.800 3.500 1 6.200" fill="none" stroke="#8e8e8e" stroke-width="1.100"/></svg>
<div class="abs" style="left:532px;top:565px;width:18px;height:9.5px;background:#5b5b5b;border-radius:5px"></div>


<!-- file menu -->
<div id="filemenu" class="abs menu">
  <div class="it"><span class="l" style="letter-spacing:-0.053px">New...</span><span class="r" style="letter-spacing:0.256px">Ctrl+N</span></div>
  <div class="it"><span class="l" style="letter-spacing:0.016px">New from Template...</span><span class="r" style="letter-spacing:0.222px">Shift+Ctrl+N</span></div>
  <div class="it"><span class="l" style="letter-spacing:-0.204px">Open...</span><span class="r" style="letter-spacing:0.172px">Ctrl+O</span></div>
  <div class="it dis"><span class="l" style="letter-spacing:-0.238px">Open Recent Files</span><span class="a"></span></div>
  <div class="it dis"><span class="l" style="letter-spacing:-0.150px">Browse in Bridge...</span><span class="r" style="letter-spacing:0.268px">Alt+Ctrl+O</span></div>
  <div class="sep"></div>
  <div class="it"><span class="l" style="letter-spacing:-0.063px">Close</span><span class="r" style="letter-spacing:0.192px">Ctrl+W</span></div>
  <div class="it"><span class="l" style="letter-spacing:-0.629px">Save</span><span class="r" style="letter-spacing:0.072px">Ctrl+S</span></div>
  <div class="it"><span class="l" style="letter-spacing:-0.313px">Save As...</span><span class="r" style="letter-spacing:0.056px">Shift+Ctrl+S</span></div>
  <div class="it"><span class="l" style="letter-spacing:-0.191px">Save a Copy...</span><span class="r" style="letter-spacing:0.168px">Alt+Ctrl+S</span></div>
  <div class="it"><span class="l" style="letter-spacing:-0.252px">Save as Template...</span></div>
  <div class="it"><span class="l" style="letter-spacing:-0.333px">Save Selected Slices...</span></div>
  <div class="it dis"><span class="l" style="letter-spacing:-0.236px">Revert</span><span class="r" style="letter-spacing:-0.439px">F12</span></div>
  <div class="sep"></div>
  <div class="it"><span class="l" style="letter-spacing:-0.151px">Search Adobe Stock...</span></div>
  <div class="it"><span class="l" style="letter-spacing:-0.214px">Place...</span><span class="r" style="letter-spacing:0.131px">Shift+Ctrl+P</span></div>
  <div class="sep"></div>
  <div class="it hl"><span class="l" style="letter-spacing:-0.086px">Export</span><span class="a"></span></div>
  <div class="it dis"><span class="l" style="letter-spacing:-0.134px">Export Selection...</span></div>
  <div class="sep"></div>
  <div class="it"><span class="l" style="letter-spacing:-0.263px">Package...</span><span class="r" style="letter-spacing:0.189px">Alt+Shift+Ctrl+P</span></div>
  <div class="it"><span class="l" style="letter-spacing:-0.217px">Scripts</span><span class="a"></span></div>
  <div class="sep"></div>
  <div class="it"><span class="l" style="letter-spacing:-0.062px">Document Setup...</span><span class="r" style="letter-spacing:0.228px">Alt+Ctrl+P</span></div>
  <div class="it"><span class="l" style="letter-spacing:0.098px">Document Color Mode</span><span class="a"></span></div>
  <div class="it"><span class="l" style="letter-spacing:-0.126px">File Info...</span><span class="r" style="letter-spacing:0.207px">Alt+Shift+Ctrl+I</span></div>
  <div class="sep"></div>
  <div class="it"><span class="l" style="letter-spacing:-0.064px">Print...</span><span class="r" style="letter-spacing:0.122px">Ctrl+P</span></div>
  <div class="sep"></div>
  <div class="it"><span class="l" style="letter-spacing:-0.254px">Exit</span><span class="r" style="letter-spacing:0.172px">Ctrl+Q</span></div>
</div>
<div id="submenu" class="abs menu">
  <div class="it"><span class="l" style="letter-spacing:-0.169px">Export for Screens...</span><span class="r" style="letter-spacing:0.108px">Alt+Ctrl+E</span></div>
  <div class="it hl"><span class="l" style="letter-spacing:-0.094px">Export As...</span></div>
  <div class="it"><span class="l" style="letter-spacing:-0.187px">Save for Web (Legacy)...</span><span class="r" style="letter-spacing:0.139px">Alt+Shift+Ctrl+S</span></div>
</div>
</div>
</body>
</html>
